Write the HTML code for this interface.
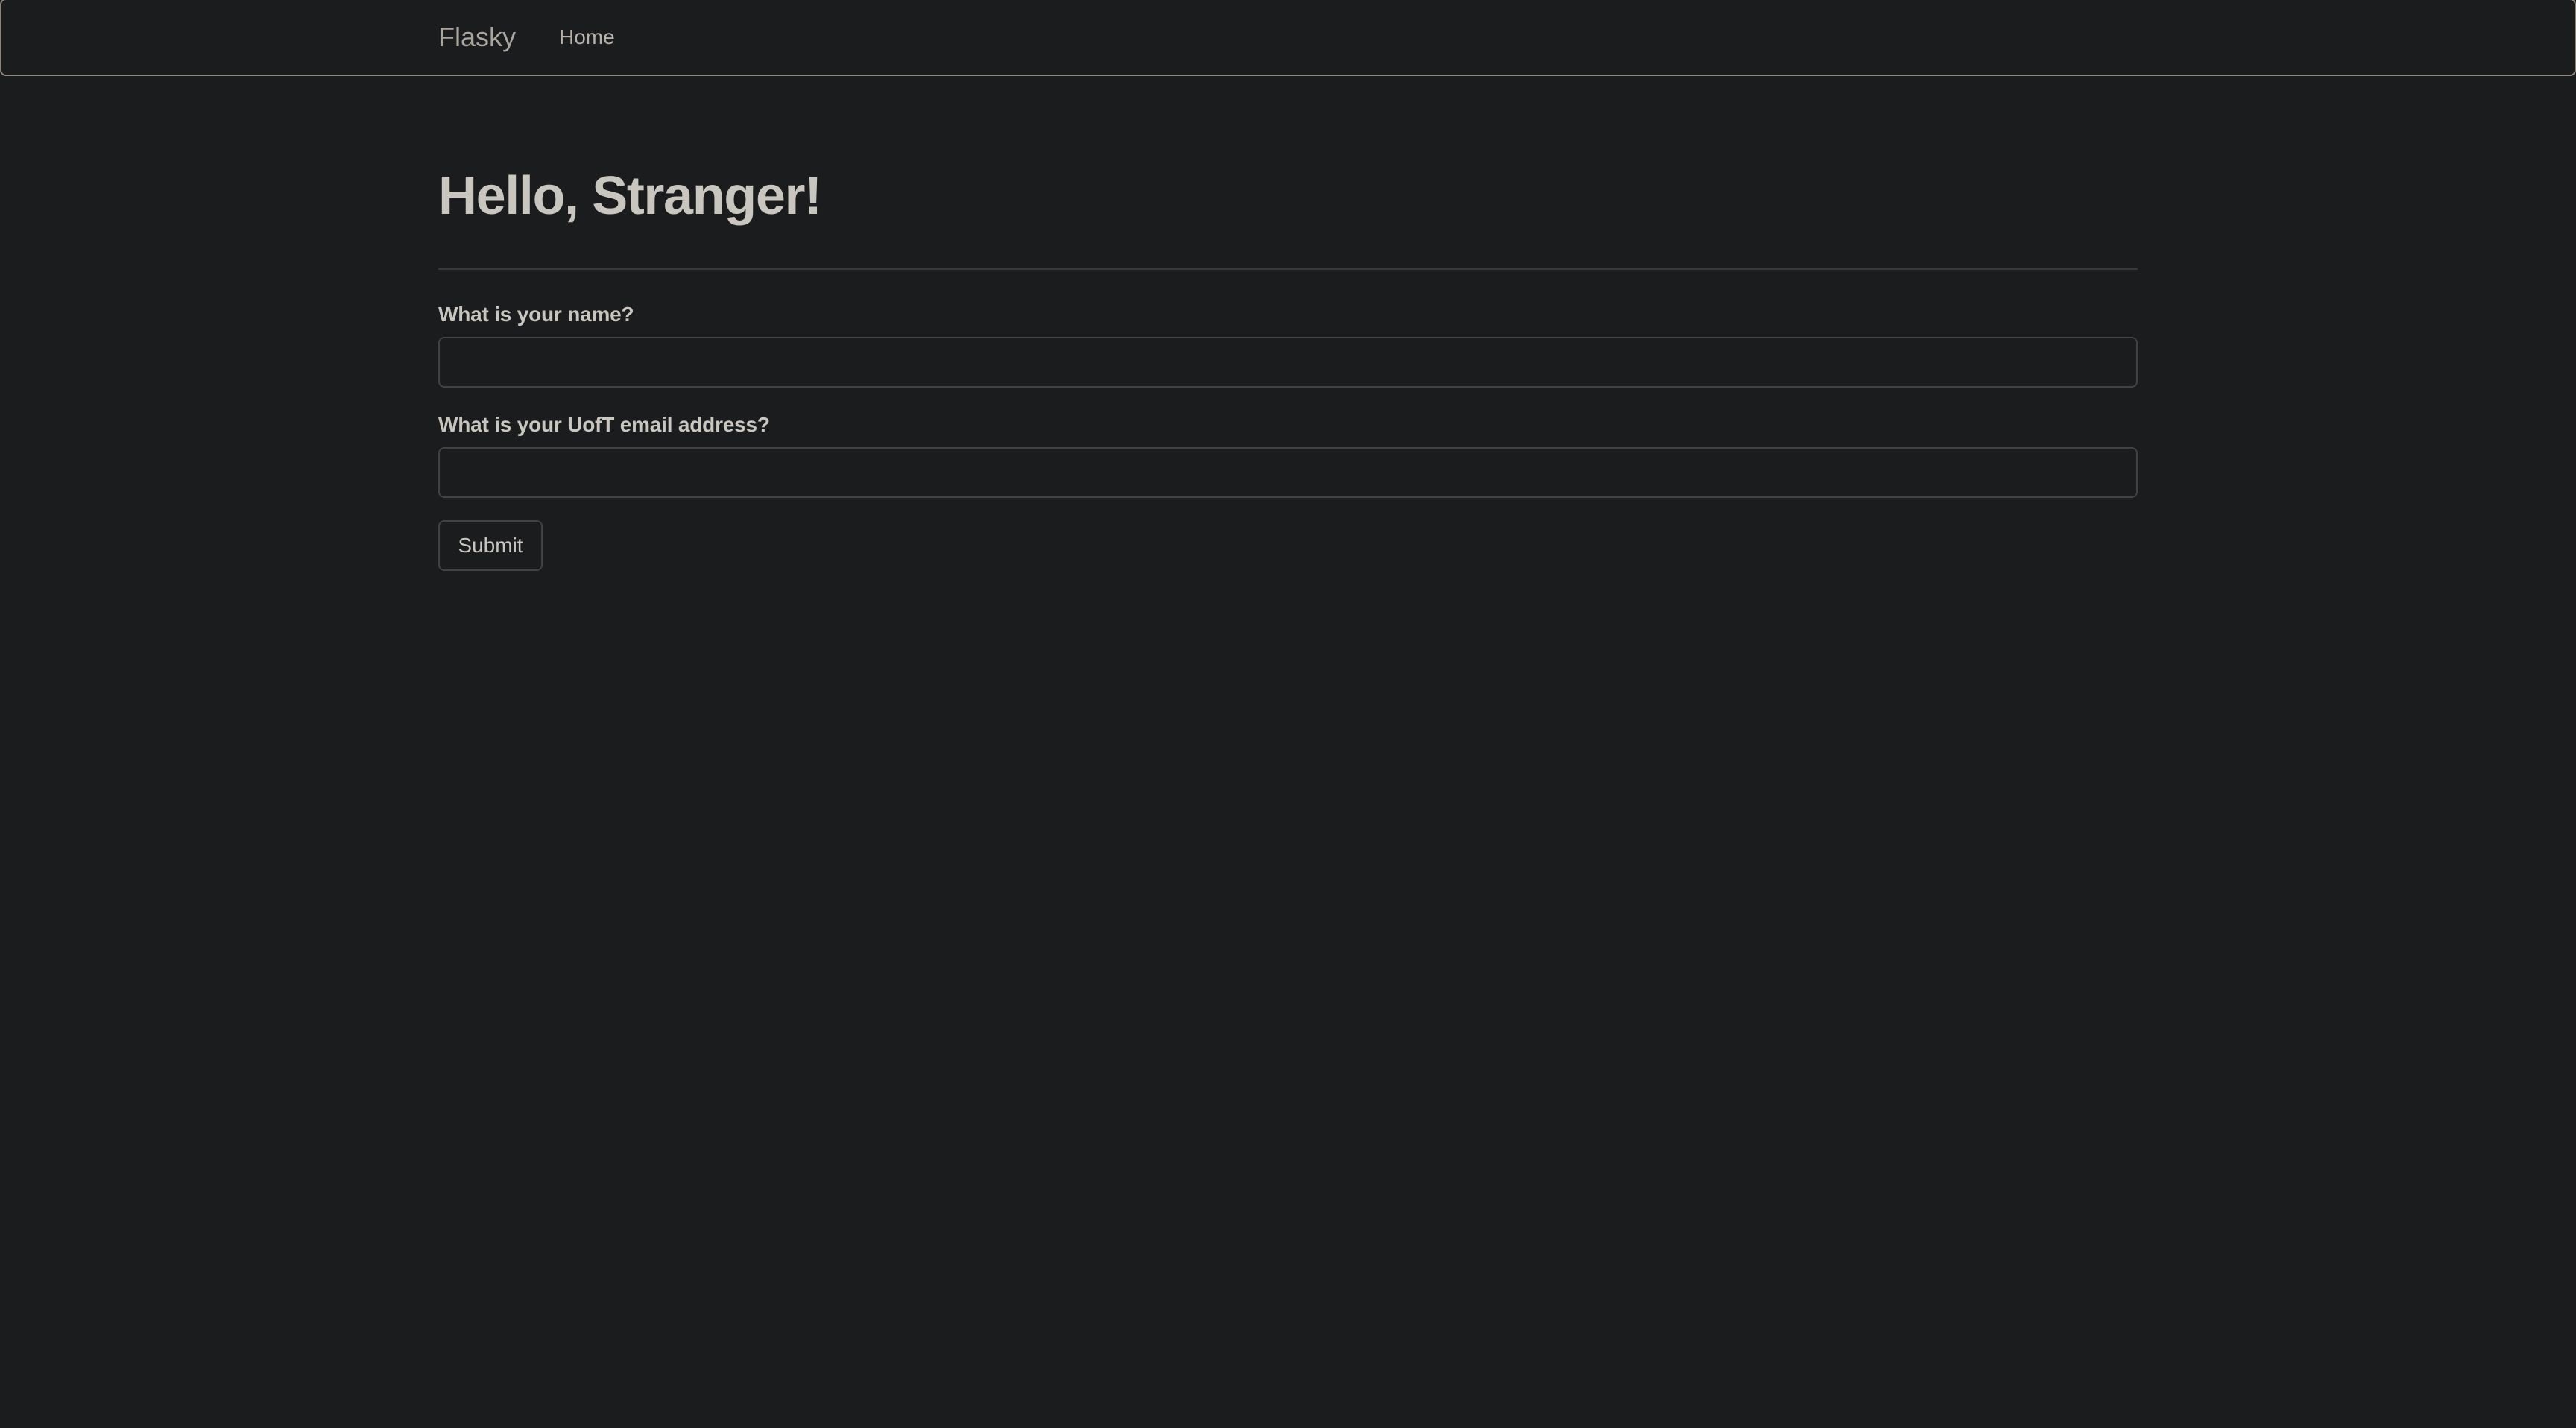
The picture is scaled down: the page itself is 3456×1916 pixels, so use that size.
<!DOCTYPE html>
<html><head><meta charset="utf-8"><style>
html,body{margin:0;padding:0;background:#1b1c1e;}
body{width:1728px;height:958px;zoom:2;font-family:"Liberation Sans",Arial,sans-serif;font-size:14px;line-height:1.42857;color:#c9c6c0;overflow:hidden;position:relative;}
.navbar{position:absolute;left:0;top:-1px;width:1726px;height:50px;border:1px solid #8c877c;border-radius:4px;background:#1b1c1e;}
.brand{position:absolute;left:279px;top:0;padding:15px;font-size:18px;line-height:20px;color:#aaa59d;}
.home{position:absolute;left:360px;top:0;padding:15px;font-size:14px;line-height:20px;color:#b5b0a8;}
.main{position:absolute;left:294px;top:0;width:1140px;}
h1{position:absolute;top:112px;left:0;margin:0;font-size:36px;font-weight:bold;letter-spacing:-0.7px;line-height:39.6px;color:#c9c6c0;}
.hr{position:absolute;top:180px;left:0;width:1140px;height:1px;background:#363a3d;}
label{position:absolute;left:0;font-weight:bold;font-size:14px;line-height:20px;color:#c9c6c0;letter-spacing:-0.1px;}
.input{position:absolute;left:0;width:1138px;height:32px;border:1px solid #3e4346;border-radius:4px;background:#1b1c1e;}
.btn{position:absolute;left:0;top:349px;width:68px;height:32px;border:1px solid #3e4346;border-radius:4px;text-align:center;line-height:32px;font-size:14px;color:#c9c6c0;}
</style></head><body>
<div class="navbar"></div>
<div class="brand">Flasky</div>
<div class="home">Home</div>
<div class="main">
<h1>Hello, Stranger!</h1>
<div class="hr"></div>
<label style="top:201px">What is your name?</label>
<div class="input" style="top:226px"></div>
<label style="top:275px">What is your UofT email address?</label>
<div class="input" style="top:300px"></div>
<div class="btn">Submit</div>
</div>
</body></html>
